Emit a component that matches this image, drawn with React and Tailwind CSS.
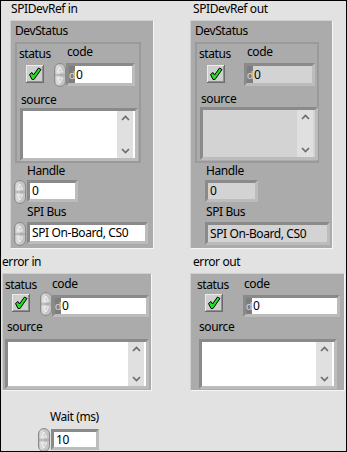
import React from "react";

// LabVIEW-style front panel pieces

function Incr() {
  return (
    <svg width="12" height="24" viewBox="0 0 12 24" className="shrink-0 block">
      <rect x="0.5" y="0.5" width="11" height="23" rx="5.5" fill="#c4c4c4" stroke="#8a8a8a" />
      <rect x="2" y="2" width="4" height="20" rx="2" fill="#d8d8d8" />
      <line x1="1" y1="12" x2="11" y2="12" stroke="#9c9c9c" />
      <path d="M6 4 L8.5 9 L3.5 9 Z" fill="none" stroke="#f2f2f2" />
      <path d="M3.5 15 L8.5 15 L6 20 Z" fill="none" stroke="#f2f2f2" />
    </svg>
  );
}

function Check() {
  return (
    <svg width="18" height="18" viewBox="0 0 18 18" className="block shrink-0">
      <rect x="0" y="0" width="18" height="18" fill="#6c6c6c" />
      <rect x="0" y="0" width="17" height="17" fill="#ececec" />
      <rect x="1" y="1" width="16" height="16" fill="#8e8e8e" />
      <rect x="1" y="1" width="15" height="15" fill="#cfcfcf" />
      <path
        d="M3.5 9.5 L6 7.5 L7.5 10 L12.5 3 L15 4.5 L8 14.5 L6 14.5 Z"
        fill="#20e020"
        stroke="#000"
        strokeWidth="1"
        strokeLinejoin="round"
      />
    </svg>
  );
}

function NumBox({ className, value, dim }) {
  return (
    <div
      className={`flex shrink-0 border-[3px] border-t-[#8a8a8a] border-l-[#8a8a8a] border-r-[#bcbcbc] border-b-[#bcbcbc] ${className}`}
    >
      <span className="w-[6px] bg-[#7e7e7e] text-[#d4d4d4] flex items-center justify-end text-[11px]">
        d
      </span>
      <span className={`flex-1 flex items-center pl-[1px] ${dim ? "bg-[#d3d3d3]" : "bg-white"}`}>
        {value}
      </span>
    </div>
  );
}

function TextBox({ className, value, dim }) {
  return (
    <div
      className={`flex shrink-0 border-[3px] border-t-[#8a8a8a] border-l-[#8a8a8a] border-r-[#bcbcbc] border-b-[#bcbcbc] ${className}`}
    >
      <span className={`flex-1 flex items-center pl-[2px] ${dim ? "bg-[#d3d3d3]" : "bg-white"}`}>
        {value}
      </span>
    </div>
  );
}

function Chevron({ up }) {
  return (
    <svg width="9" height="6" viewBox="0 0 9 6" className="block">
      <path
        d={up ? "M1 5 L4.5 1.5 L8 5" : "M1 1 L4.5 4.5 L8 1"}
        fill="none"
        stroke="#6a6a6a"
        strokeWidth="1.6"
      />
    </svg>
  );
}

function StrBox({ className, dim }) {
  return (
    <div
      className={`flex shrink-0 border-[3px] border-t-[#8a8a8a] border-l-[#8a8a8a] border-r-[#bcbcbc] border-b-[#bcbcbc] ${className} ${dim ? "bg-[#d3d3d3]" : "bg-white"}`}
    >
      <div className="flex-1" />
      <div className="w-[16px] bg-[#e0e0e0] flex flex-col justify-between items-center py-[4px]">
        <Chevron up />
        <Chevron />
      </div>
      <div className="w-[2px]" />
    </div>
  );
}

const outerCluster =
  "bg-[#ababab] border border-t-[#cfcfcf] border-l-[#cfcfcf] border-r-[#f6f6f6] border-b-[#f6f6f6]";

function DevRef({ out }) {
  return (
    <div className={`h-[229px] ${outerCluster}`}>
      <div className="pl-[4px] pt-[2px] h-[21px]">DevStatus</div>
      <div
        className={`ml-[4px] h-[121px] border-2 border-[#9a9a9a] ${out ? "w-[124px]" : "w-[126px]"}`}
      >
        <div className="flex">
          <div className={out ? "w-[47px]" : "w-[37px]"}>
            <div className="pl-[2px] pt-[2px] h-[19px]">status</div>
            <div className={`mt-[2px] ${out ? "ml-[10px]" : "ml-[9px]"}`}>
              <Check />
            </div>
          </div>
          <div>
            <div className={`h-[19px] ${out ? "pl-[3px]" : "pl-[13px]"}`}>code</div>
            <div className="flex">
              {!out && <Incr />}
              <NumBox className={out ? "w-[71px] h-[23px]" : "w-[69px] h-[23px]"} value="0" dim={out} />
            </div>
          </div>
        </div>
        <div className="pl-[4px] pt-[4px] h-[20px] mt-[1px]">source</div>
        <StrBox className="ml-[3px] w-[118px] h-[53px]" dim={out} />
      </div>
      <div className={`h-[17px] ${out ? "pl-[15px]" : "pl-[16px]"}`}>Handle</div>
      <div className="flex h-[24px]">
        {out ? (
          <TextBox className="ml-[14px] w-[53px] h-[22px]" value="0" dim />
        ) : (
          <>
            <div className="ml-[3px]">
              <Incr />
            </div>
            <TextBox className="ml-[1px] w-[51px] h-[22px]" value="0" />
          </>
        )}
      </div>
      <div className={`h-[18px] ${out ? "pl-[15px]" : "pl-[16px]"}`}>SPI Bus</div>
      <div className="flex h-[24px]">
        {out ? (
          <TextBox className="ml-[14px] w-[125px] h-[23px]" value="SPI On-Board, CS0" dim />
        ) : (
          <>
            <div className="ml-[3px]">
              <Incr />
            </div>
            <TextBox className="ml-[1px] w-[121px] h-[22px]" value="SPI On-Board, CS0" />
          </>
        )}
      </div>
    </div>
  );
}

function ErrCluster({ out }) {
  return (
    <div className={`h-[118px] ${outerCluster}`}>
      <div className="flex">
        <div className={out ? "w-[52px]" : "w-[37px]"}>
          <div className={`pt-[3px] h-[20px] ${out ? "pl-[6px]" : "pl-[2px]"}`}>status</div>
          <div className={out ? "ml-[14px]" : "ml-[9px]"}>
            <Check />
          </div>
        </div>
        <div>
          <div className={`h-[18px] pt-[2px] ${out ? "pl-[1px]" : "pl-[12px]"}`}>code</div>
          <div className="flex">
            {!out && <Incr />}
            <NumBox className="w-[97px] h-[22px] mt-[3px]" value="0" />
          </div>
        </div>
      </div>
      <div className={`h-[22px] pt-[2px] ${out ? "pl-[8px]" : "pl-[4px]"}`}>source</div>
      <StrBox className={out ? "ml-[8px] w-[138px] h-[50px]" : "ml-[2px] w-[144px] h-[50px]"} />
    </div>
  );
}

export default function App() {
  return (
    <div className="w-[347px] h-[452px] overflow-hidden border border-black bg-[#e2e2e2] text-black text-[12px] leading-[16px] tracking-[-0.4px] font-['Noto_Sans',sans-serif]">
      <div className="flex h-[248px]">
        <div className="ml-[9px] w-[144px]">
          <div className="h-[19px] pl-[1px]">SPIDevRef in</div>
          <DevRef />
        </div>
        <div className="ml-[36px] w-[143px]">
          <div className="h-[19px] pl-[3px]">SPIDevRef out</div>
          <DevRef out />
        </div>
      </div>

      <div className="flex">
        <div className="ml-[1px] w-[150px]">
          <div className="h-[24px] pt-[5px]">error in</div>
          <ErrCluster />
        </div>
        <div className="ml-[38px] w-[155px]">
          <div className="h-[24px] pt-[5px] pl-[3px]">error out</div>
          <ErrCluster out />
        </div>
      </div>

      <div className="pt-[18px]">
        <div className="h-[19px] pl-[49px]">Wait (ms)</div>
        <div className="flex">
          <div className="ml-[37px]">
            <Incr />
          </div>
          <TextBox className="ml-[1px] mt-[1px] w-[48px] h-[21px]" value="10" />
        </div>
      </div>
    </div>
  );
}
